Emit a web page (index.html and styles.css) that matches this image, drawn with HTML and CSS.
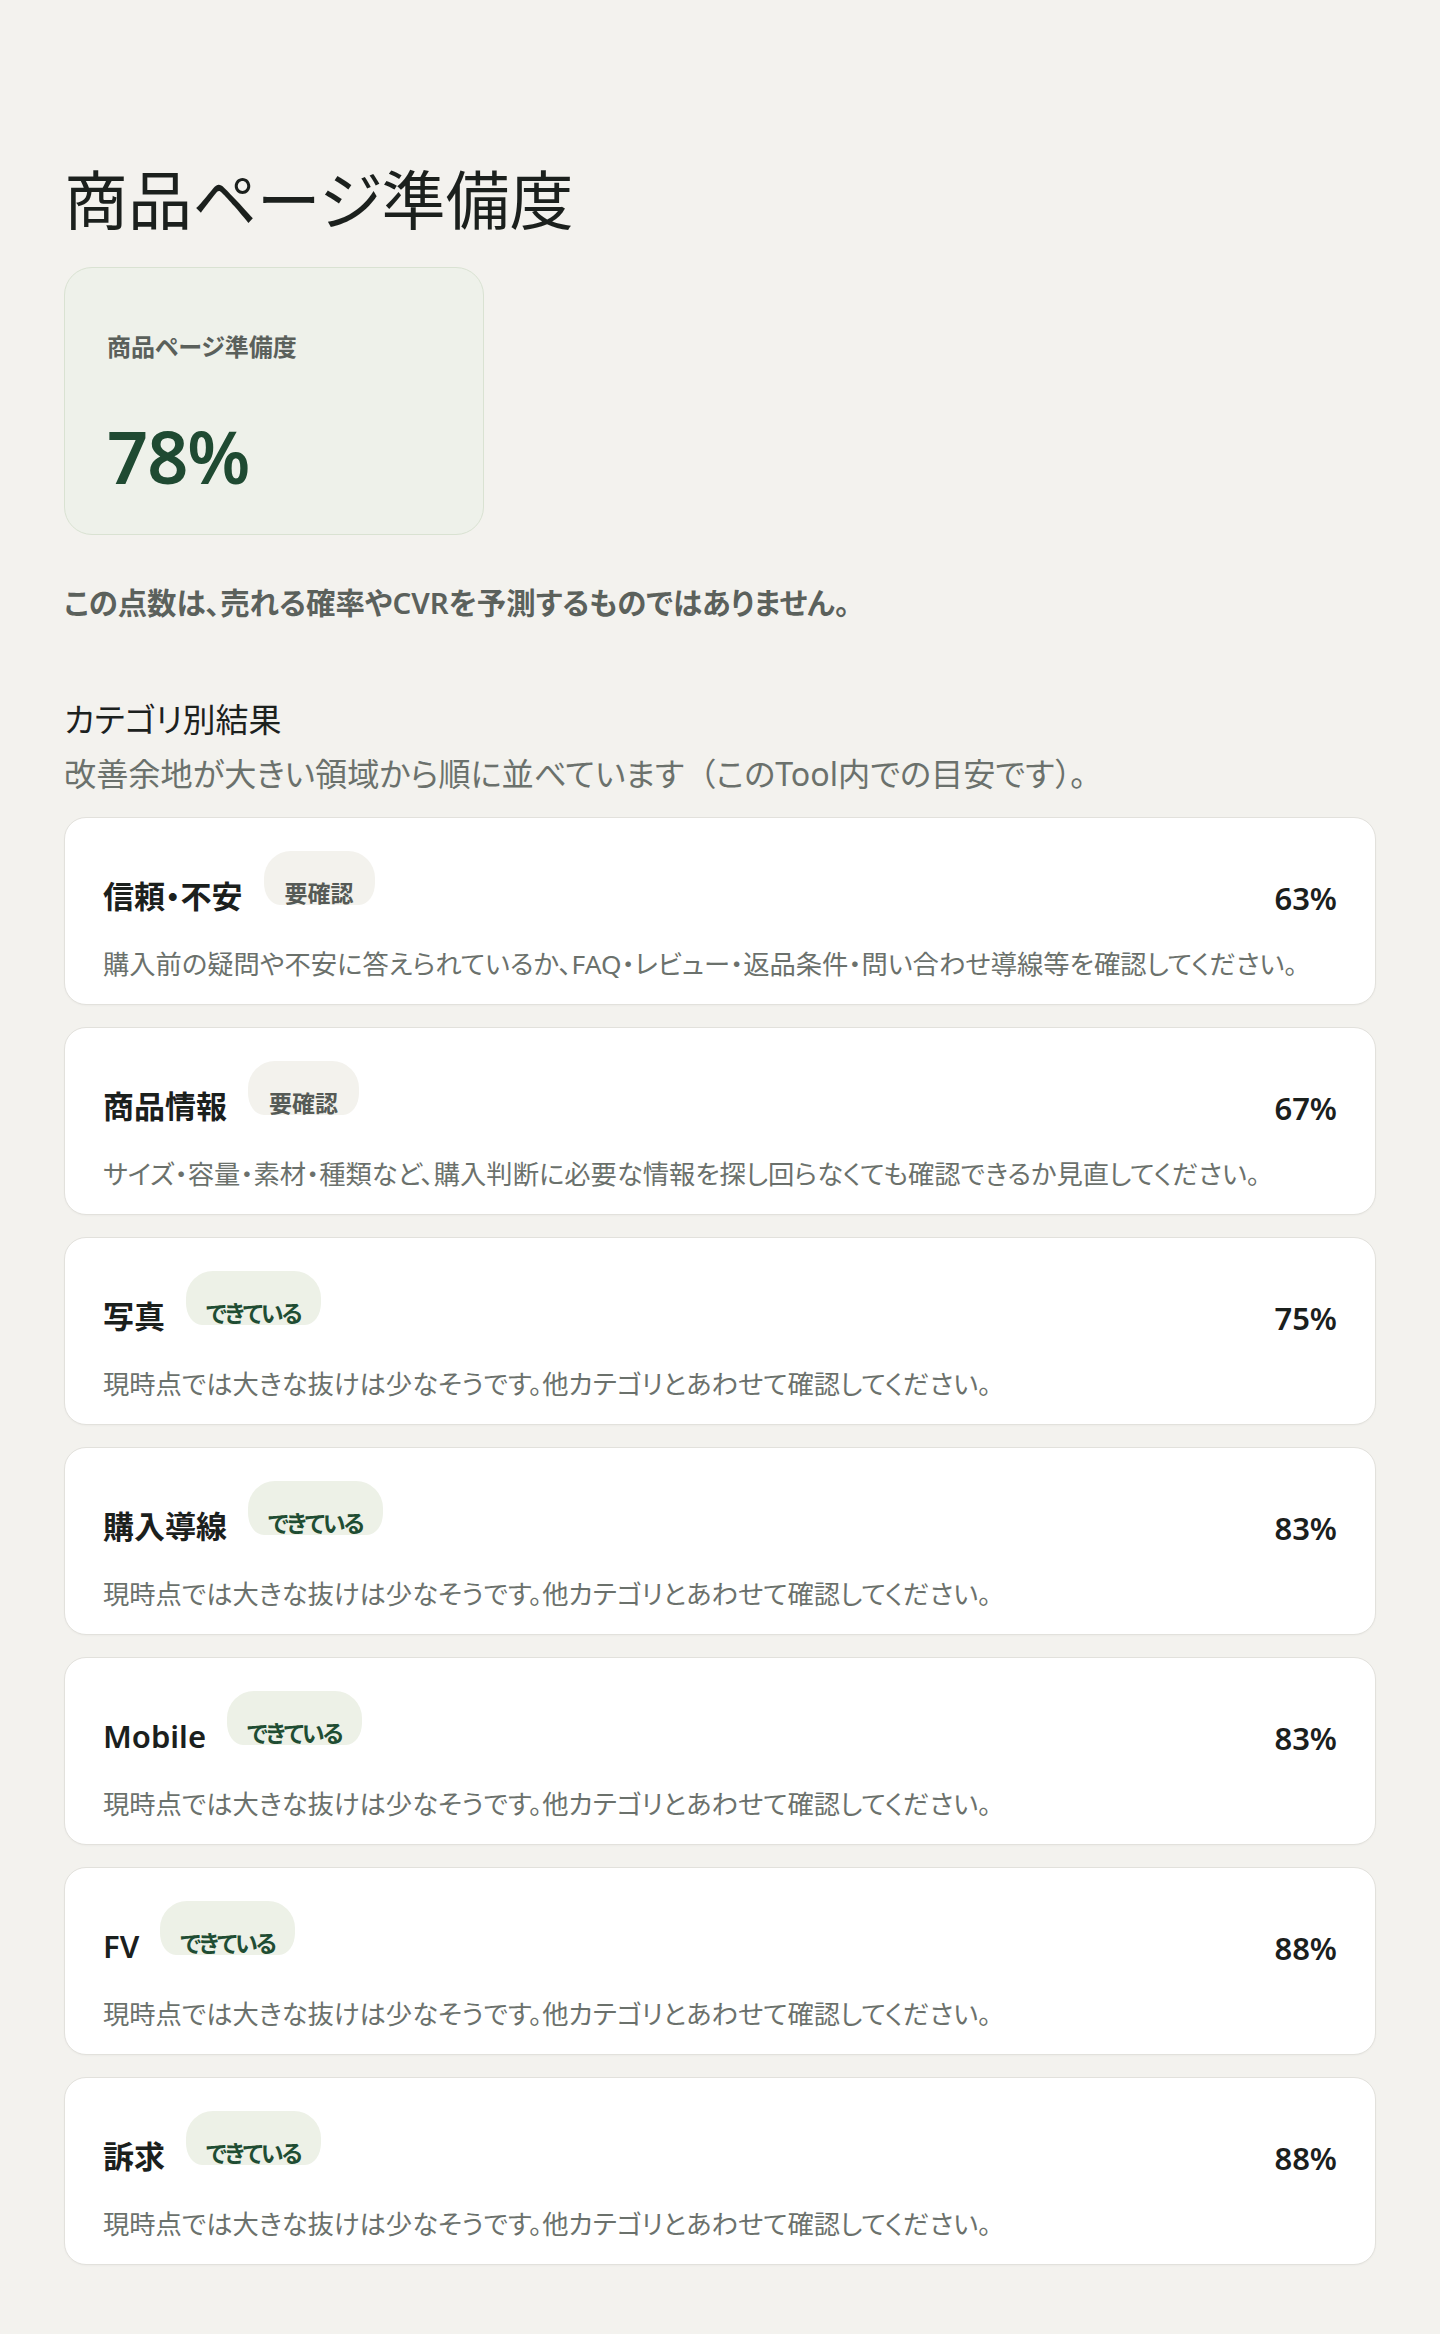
FILE: index.html
```html
<!DOCTYPE html>
<html lang="ja">
<head>
<meta charset="utf-8">
<title>商品ページ準備度</title>
<link rel="stylesheet" href="styles.css">
</head>
<body>
<main class="page">
  <h1 class="page-title">商品ページ準備度</h1>

  <section class="score-card">
    <div class="score-label">商品ページ準備度</div>
    <div class="score-value">78%</div>
  </section>

  <p class="note">この点数は、売れる確率やCVRを予測するものではありません。</p>

  <h2 class="section-title">カテゴリ別結果</h2>
  <p class="section-sub">改善余地が大きい領域から順に並べています<span class="fw">（</span>このTool内での目安です<span class="fw">）。</span></p>

  <div class="cat-list">
    <article class="cat-card">
      <div class="cat-head">
        <h3 class="cat-title">信頼・不安</h3>
        <span class="badge badge-warn">要確認</span>
        <span class="cat-score">63%</span>
      </div>
      <p class="cat-desc">購入前の疑問や不安に答えられているか、FAQ・レビュー・返品条件・問い合わせ導線等を確認してください。</p>
    </article>

    <article class="cat-card">
      <div class="cat-head">
        <h3 class="cat-title">商品情報</h3>
        <span class="badge badge-warn">要確認</span>
        <span class="cat-score">67%</span>
      </div>
      <p class="cat-desc">サイズ・容量・素材・種類など、購入判断に必要な情報を探し回らなくても確認できるか見直してください。</p>
    </article>

    <article class="cat-card">
      <div class="cat-head">
        <h3 class="cat-title">写真</h3>
        <span class="badge badge-ok">できている</span>
        <span class="cat-score">75%</span>
      </div>
      <p class="cat-desc">現時点では大きな抜けは少なそうです。他カテゴリとあわせて確認してください。</p>
    </article>

    <article class="cat-card">
      <div class="cat-head">
        <h3 class="cat-title">購入導線</h3>
        <span class="badge badge-ok">できている</span>
        <span class="cat-score">83%</span>
      </div>
      <p class="cat-desc">現時点では大きな抜けは少なそうです。他カテゴリとあわせて確認してください。</p>
    </article>

    <article class="cat-card">
      <div class="cat-head">
        <h3 class="cat-title cat-title-latin">Mobile</h3>
        <span class="badge badge-ok">できている</span>
        <span class="cat-score">83%</span>
      </div>
      <p class="cat-desc">現時点では大きな抜けは少なそうです。他カテゴリとあわせて確認してください。</p>
    </article>

    <article class="cat-card">
      <div class="cat-head">
        <h3 class="cat-title cat-title-latin">FV</h3>
        <span class="badge badge-ok">できている</span>
        <span class="cat-score">88%</span>
      </div>
      <p class="cat-desc">現時点では大きな抜けは少なそうです。他カテゴリとあわせて確認してください。</p>
    </article>

    <article class="cat-card">
      <div class="cat-head">
        <h3 class="cat-title">訴求</h3>
        <span class="badge badge-ok">できている</span>
        <span class="cat-score">88%</span>
      </div>
      <p class="cat-desc">現時点では大きな抜けは少なそうです。他カテゴリとあわせて確認してください。</p>
    </article>
  </div>
</main>
</body>
</html>
```

FILE: styles.css
```css
* {
  box-sizing: border-box;
}

html, body {
  margin: 0;
  padding: 0;
}

body {
  background: #f3f2ee;
  color: #1c211e;
  font-family: "Noto Sans", "Noto Sans CJK JP", sans-serif;
  font-feature-settings: "palt";
}

.page {
  padding: 160px 64px 69px;
}

.page-title {
  margin: 0;
  font-size: 64px;
  line-height: 80px;
  font-weight: 400;
  color: #1b201d;
}

.score-card {
  margin-top: 27px;
  width: 420px;
  height: 268px;
  padding: 63px 42px 0;
  background: #eef1ea;
  border: 1.5px solid #d9e2d2;
  border-radius: 28px;
}

.score-label {
  font-size: 24px;
  line-height: 32px;
  font-weight: 600;
  color: #5a605b;
}

.score-value {
  margin-top: 53px;
  font-size: 72px;
  line-height: 80px;
  font-weight: 600;
  color: #1f4a32;
  letter-spacing: -1px;
}

.note {
  margin: 48px 0 0;
  font-size: 29.4px;
  line-height: 40px;
  font-weight: 600;
  color: #5b615c;
}

.section-title {
  margin: 74.5px 0 0;
  font-size: 33px;
  line-height: 44px;
  font-weight: 400;
  color: #1c211e;
}

.section-sub {
  margin: 10px 0 0;
  font-size: 32.2px;
  line-height: 44px;
  font-weight: 400;
  color: #6b716c;
}

.fw {
  font-feature-settings: normal;
}

.cat-list {
  margin-top: 21.5px;
  display: flex;
  flex-direction: column;
  gap: 22px;
}

.cat-card {
  background: #ffffff;
  border: 1.5px solid #e2e1dc;
  border-radius: 22px;
  padding: 32.5px 38px 22.5px;
  box-shadow: 0 1px 2px rgba(0, 0, 0, 0.03);
}

.cat-head {
  display: flex;
  align-items: flex-start;
  height: 67px;
}

.cat-title {
  margin: 25px 0 0;
  font-size: 31px;
  line-height: 40px;
  font-weight: 700;
  color: #1b201d;
}

.cat-title-latin {
  font-weight: 600;
}

.badge {
  margin-left: 21px;
  height: 54px;
  padding: 29px 21px 0;
  font-size: 23px;
  line-height: 26px;
  font-weight: 600;
  border-radius: 27px 27px 16px 16px / 27px 27px 22px 22px;
  white-space: nowrap;
}

.badge-warn {
  background: #f3f2ed;
  color: #555a56;
}

.badge-ok {
  background: #edf1e7;
  color: #1f4d33;
  padding-left: 20px;
  padding-right: 20px;
  letter-spacing: -2px;
}

.cat-score {
  margin: 27px 0 0 auto;
  font-size: 31px;
  line-height: 40px;
  font-weight: 600;
  color: #1b201d;
}

.cat-desc {
  margin: 28px 0 0;
  font-size: 26.3px;
  line-height: 36px;
  color: #6b716c;
  white-space: nowrap;
}
```
